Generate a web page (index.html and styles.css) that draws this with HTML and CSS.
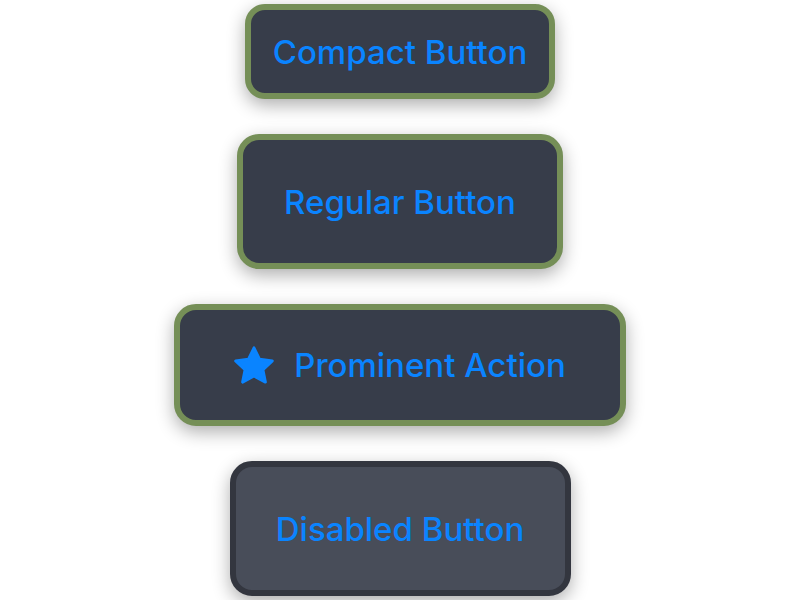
FILE: index.html
```html
<!DOCTYPE html>
<html>
<head>
<meta charset="utf-8">
<link rel="stylesheet" href="styles.css">
</head>
<body>
<main class="stack">
  <button class="btn btn-compact">Compact Button</button>
  <button class="btn btn-regular">Regular Button</button>
  <button class="btn btn-prominent">
    <svg class="star" viewBox="2.2 2 19.6 18.6" width="40" height="38" aria-hidden="true">
      <path d="M12 2.9l2.75 5.6 6.25.8-4.6 4.3 1.2 6.1L12 16.7l-5.6 3 1.2-6.1L3 9.3l6.25-.8z" fill="#0a84ff" stroke="#0a84ff" stroke-width="1.4" stroke-linejoin="round"/>
    </svg>
    <span>Prominent Action</span>
  </button>
  <button class="btn btn-disabled" disabled>Disabled Button</button>
</main>
</body>
</html>
```
FILE: styles.css
```css
html, body {
  margin: 0;
  padding: 0;
  background: #ffffff;
}
.stack {
  min-height: 100vh;
  display: flex;
  flex-direction: column;
  align-items: center;
  justify-content: center;
  gap: 35px;
}
.btn {
  display: flex;
  align-items: center;
  justify-content: center;
  font-family: Inter, "Liberation Sans", sans-serif;
  font-size: 33px;
  font-weight: 500;
  line-height: 40px;
  color: #0a84ff;
  background: #373d4a;
  border: 6px solid #758f57;
  border-radius: 22px;
  box-shadow: 0 6px 18px rgba(0, 0, 0, 0.32);
  margin: 0;
  padding: 0;
  cursor: pointer;
  white-space: nowrap;
}
.btn-compact {
  width: 310px;
  height: 95px;
  border-radius: 20px;
}
.btn-regular {
  width: 326px;
  height: 135px;
}
.btn-prominent {
  width: 452px;
  height: 122px;
  gap: 20px;
}
.star {
  display: block;
  flex: none;
}
.btn-disabled {
  width: 341px;
  height: 135px;
  background: #484d59;
  border-color: #33363f;
  color: #0a84ff;
}
```
